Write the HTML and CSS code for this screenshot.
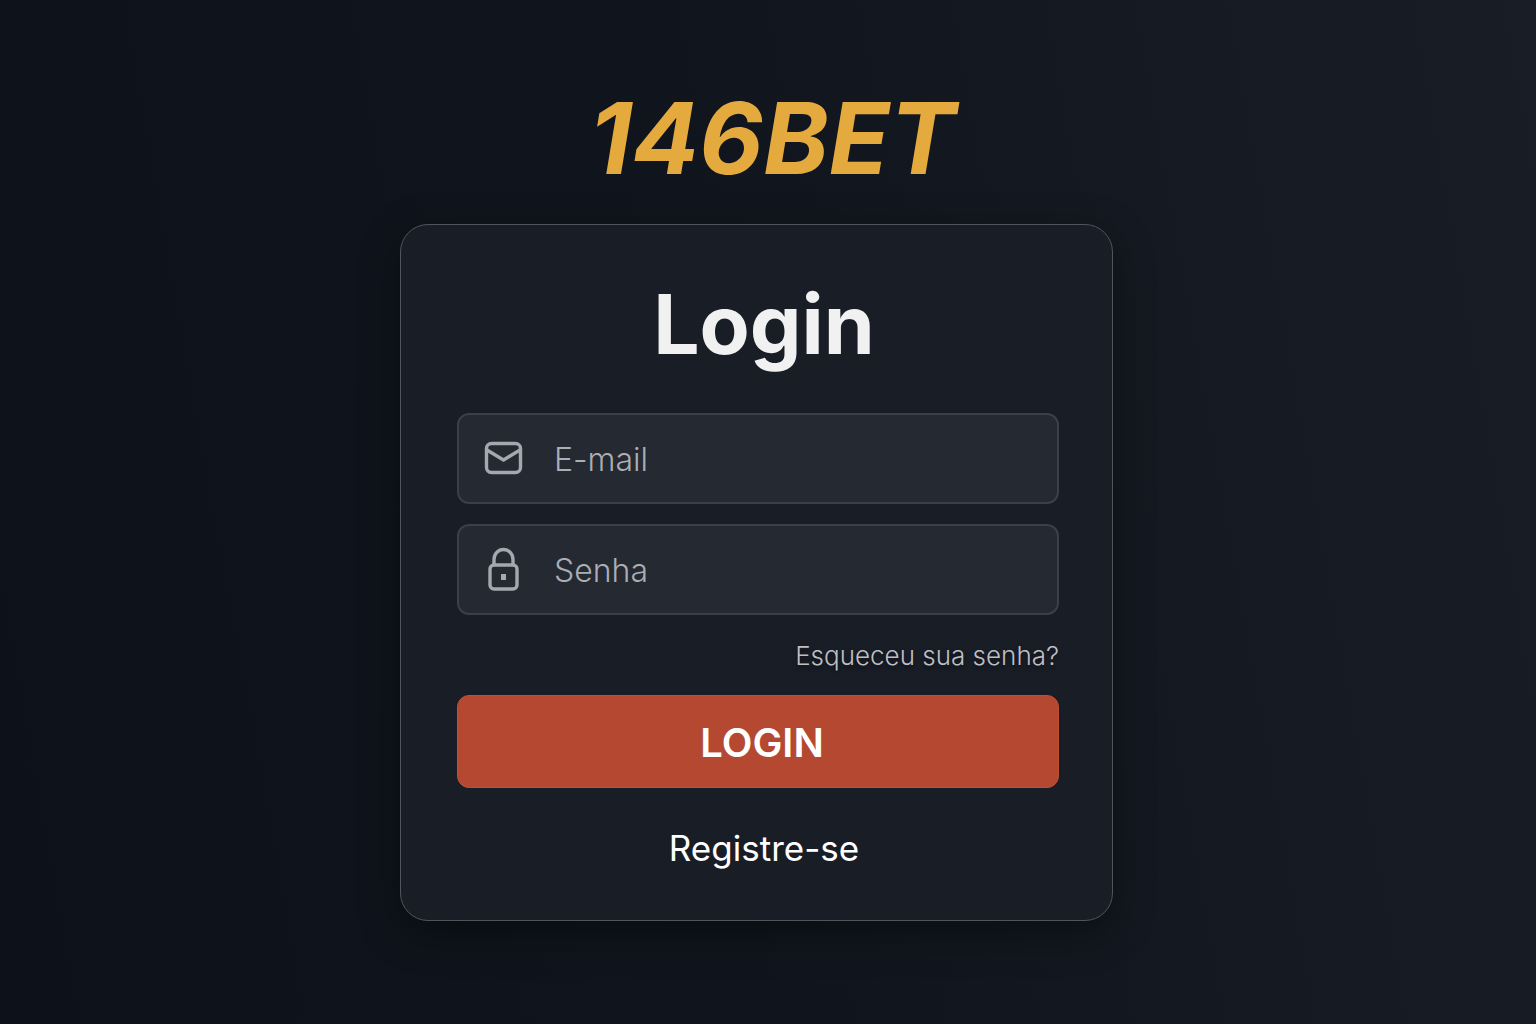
FILE: index.html
```html
<!DOCTYPE html>
<html lang="pt-BR">
<head>
    <meta charset="UTF-8">
    <meta name="viewport" content="width=device-width, initial-scale=1.0">
    <title>146BET - Login</title>
    <link rel="stylesheet" href="styles.css">
</head>
<body>
    <main class="page">
        <header class="logo">146BET</header>
        <section class="card">
            <h1>Login</h1>
            <form action="/login" method="post">
                <div class="field">
                    <label for="email" aria-label="E-mail">
                        <svg width="40" height="48" viewBox="0 0 40 48" fill="none" stroke="currentColor" stroke-width="3.400" stroke-linejoin="round">
                            <rect x="3.500" y="8.500" width="34" height="29" rx="5"/>
                            <path d="M4 15L20.500 25L37 15"/>
                        </svg>
                    </label>
                    <input type="email" id="email" name="email" placeholder="E-mail" required>
                </div>
                <div class="field">
                    <label for="password" aria-label="Senha">
                        <svg width="40" height="48" viewBox="0 0 40 48" fill="none" stroke="currentColor" stroke-width="3.400">
                            <rect x="7" y="19" width="27" height="24" rx="4"/>
                            <path d="M11 19V13.500a9.500 10 0 0 1 19 0V19"/>
                            <rect x="18" y="28" width="5" height="6" fill="currentColor" stroke="none"/>
                        </svg>
                    </label>
                    <input type="password" id="password" name="password" placeholder="Senha" required>
                </div>
                <a class="forgot" href="/forgot">Esqueceu sua senha?</a>
                <button type="submit">LOGIN</button>
            </form>
            <a class="register" href="/register">Registre-se</a>
        </section>
    </main>
</body>
</html>
```

FILE: styles.css
```css
* {
    box-sizing: border-box;
}
body {
    font-family: Inter, 'Liberation Sans', sans-serif;
    background: linear-gradient(80deg, #0d121a 0%, #10151d 45%, #191d25 100%);
    color: #fff;
    margin: 0;
    min-height: 100vh;
}
.page {
    display: flex;
    flex-direction: column;
    align-items: center;
    padding: 78px 23px 78px 0;
}
.logo {
    font-size: 99px;
    font-weight: 700;
    font-style: italic;
    line-height: 120px;
    color: #e5aa3d;
    padding-left: 32px;
    margin-bottom: 26px;
}
.card {
    display: flex;
    flex-direction: column;
    width: 100%;
    max-width: 713px;
    padding: 48px 53px 48px 56px;
    background-color: #191d26;
    border: 1px solid #50545d;
    border-radius: 28px;
    box-shadow: 0 12px 40px rgba(0, 0, 0, 0.4);
}
h1 {
    margin: 0 0 36px;
    padding-left: 12px;
    font-size: 82px;
    font-weight: 700;
    line-height: 104px;
    text-align: center;
    color: #f1f1f2;
}
form {
    display: flex;
    flex-direction: column;
}
.field {
    display: flex;
    align-items: center;
    height: 91px;
    margin-bottom: 20px;
    padding: 0 24px;
    background-color: #252932;
    border: 2px solid #3b3f49;
    border-radius: 12px;
}
.field label {
    display: flex;
    color: #a5a8ae;
}
.field input {
    flex: 1;
    min-width: 0;
    margin-left: 31px;
    padding: 2px 0 0;
    font-family: inherit;
    font-size: 32px;
    font-weight: 300;
    color: #fff;
    background: none;
    border: none;
    outline: none;
}
.field input::placeholder {
    color: #abaeb4;
    opacity: 1;
}
.forgot {
    align-self: flex-end;
    margin-bottom: 18px;
    font-size: 26px;
    font-weight: 300;
    line-height: 42px;
    color: #bdbfc4;
    text-decoration: none;
    text-shadow: 0 3px 4px rgba(0, 0, 0, 0.5);
}
button {
    height: 93px;
    padding: 2px 0 0 8px;
    font-family: inherit;
    font-size: 40px;
    font-weight: 600;
    color: #fff;
    background-color: #b44831;
    border: 1px solid #bf5034;
    border-radius: 12px;
    cursor: pointer;
}
button:hover {
    background-color: #c25239;
}
.register {
    align-self: center;
    margin-top: 36px;
    padding-left: 12px;
    font-size: 35px;
    line-height: 48px;
    color: #fff;
    text-decoration: none;
}
```
